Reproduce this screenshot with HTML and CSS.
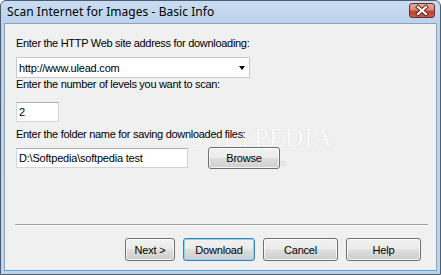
FILE: index.html
```html
<!DOCTYPE html>
<html>
<head>
<meta charset="utf-8">
<link rel="stylesheet" href="styles.css">
</head>
<body>
<div class="window">
  <div class="titlebar">
    <span class="title">Scan Internet for Images - Basic Info</span>
    <span class="close">
      <svg width="26" height="15" viewBox="0 0 26 15">
        <path d="M9 4 L17 11 M17 4 L9 11" stroke="#5a1f1f" stroke-width="4" stroke-linecap="square"/>
        <path d="M9 4 L17 11 M17 4 L9 11" stroke="#ffffff" stroke-width="2.2" stroke-linecap="square"/>
      </svg>
    </span>
  </div>
  <div class="client">
    <div class="watermark">SOFTPEDIA</div>
    <div class="watermark-url">www.softpedia.com</div>
    <div class="label">Enter the HTTP Web site address for downloading:</div>
    <div class="combo">
      <span class="field-text">http://www.ulead.com</span>
      <span class="arrow"></span>
    </div>
    <div class="label">Enter the number of levels you want to scan:</div>
    <div class="field field-levels"><span class="field-text">2</span></div>
    <div class="label label-folder">Enter the folder name for saving downloaded files:</div>
    <div class="folder-row">
      <div class="field field-folder"><span class="field-text">D:\Softpedia\softpedia test</span></div>
      <button class="btn btn-browse">Browse</button>
    </div>
    <div class="spacer"></div>
    <div class="separator"></div>
    <div class="buttons">
      <button class="btn btn-next">Next &gt;</button>
      <button class="btn btn-default btn-download">Download</button>
      <button class="btn btn-cancel">Cancel</button>
      <button class="btn btn-help">Help</button>
    </div>
  </div>
</div>
</body>
</html>
```
FILE: styles.css
```css
* { box-sizing: border-box; }
html, body { margin: 0; padding: 0; background: #ffffff; }
body { width: 441px; height: 275px; overflow: hidden; }

.window {
  width: 441px;
  height: 275px;
  display: flex;
  flex-direction: column;
  border: 1px solid #4d5d70;
  border-radius: 6px 6px 0 0;
  background: linear-gradient(to bottom, #c9dcf1 0px, #bcd3ec 22px, #bfd4ec 100%);
  padding: 0 3px 3px 3px;
  overflow: hidden;
}

.titlebar {
  height: 22px;
  flex: none;
  display: flex;
  align-items: center;
  justify-content: space-between;
  padding: 0 2px 0 3px;
}

.title {
  font-family: "Noto Sans", "DejaVu Sans", sans-serif;
  font-size: 12px;
  color: #000000;
  letter-spacing: 0.05px;
  margin-top: -1px;
}

.close {
  width: 26px;
  height: 15px;
  margin-top: -3px;
  border: 1px solid #6a2b2b;
  border-radius: 3px;
  background: linear-gradient(to bottom, #e9aa9a 0%, #d98a78 45%, #c2452f 55%, #c45a47 100%);
  display: flex;
  align-items: center;
  justify-content: center;
  overflow: hidden;
}
.close svg { display: block; margin: -1px; }

.client {
  position: relative;
  z-index: 0;
  flex: 1;
  background: #f0f0f0;
  border: 1px solid #8aa4c0;
  border-bottom: 1px solid #5d9fd1;
  padding: 13px 0 9px 11px;
  display: flex;
  flex-direction: column;
  align-items: flex-start;
  font-family: "Liberation Sans", Arial, sans-serif;
  font-size: 11px;
  color: #000000;
}

.label {
  height: 13px;
  line-height: 13px;
  white-space: nowrap;
  letter-spacing: -0.3px;
}

.combo, .field {
  background: #ffffff;
  border: 1px solid #d2d6dc;
  border-top-color: #abadb3;
  display: flex;
  align-items: center;
  padding-left: 2px;
}
.combo {
  width: 234px;
  height: 21px;
  margin: 7px 0 0 0;
  justify-content: space-between;
  padding-right: 4px;
  border-color: #c6c9ce;
}
.field-text {
  line-height: 13px;
  white-space: nowrap;
  letter-spacing: -0.2px;
  margin-top: 1px;
}
.arrow {
  width: 0;
  height: 0;
  border-left: 3.5px solid transparent;
  border-right: 3.5px solid transparent;
  border-top: 4px solid #000000;
  margin-top: 1px;
}

.field { height: 20px; }
.field-levels { width: 43px; margin: 11px 0 6px 0; }
.field-folder { width: 172px; }

.folder-row {
  margin-top: 6px;
  display: flex;
  align-items: center;
  gap: 20px;
  height: 22px;
}

.btn {
  font-family: "Liberation Sans", Arial, sans-serif;
  font-size: 11px;
  letter-spacing: -0.2px;
  color: #000000;
  height: 23px;
  border: 1px solid #707070;
  border-radius: 3px;
  background: linear-gradient(to bottom, #f2f2f2 0%, #ebebeb 48%, #dddddd 52%, #cfcfcf 100%);
  box-shadow: inset 0 0 0 1px rgba(255, 255, 255, 0.75);
  padding: 0;
  margin: 0;
}
.btn-browse { width: 72px; height: 22px; }

.spacer { flex: 1; }

.separator {
  width: 413px;
  height: 2px;
  margin-left: -1px;
  border-top: 1px solid #a0a0a0;
  border-bottom: 1px solid #ffffff;
}

.buttons {
  align-self: stretch;
  display: flex;
  justify-content: flex-end;
  gap: 8px;
  margin-top: 12px;
  padding-right: 15px;
}
.btn-next { width: 50px; }
.btn-download { width: 72px; }
.btn-cancel { width: 75px; }
.btn-help { width: 75px; }
.btn-default {
  border-color: #3c7fb1;
  box-shadow: inset 0 0 0 1px #8fd4f3;
}

.watermark {
  position: absolute;
  z-index: -1;
  left: 184px;
  top: 100px;
  font-family: "Liberation Serif", serif;
  font-size: 25px;
  letter-spacing: 1px;
  color: #fbfbfb;
  text-shadow: 0 0 1px rgba(150, 150, 150, 0.35);
  pointer-events: none;
}
.watermark-url {
  position: absolute;
  z-index: -1;
  left: 203px;
  top: 134px;
  font-family: "Liberation Sans", sans-serif;
  font-size: 9px;
  color: #d6d6d6;
  pointer-events: none;
}
```
